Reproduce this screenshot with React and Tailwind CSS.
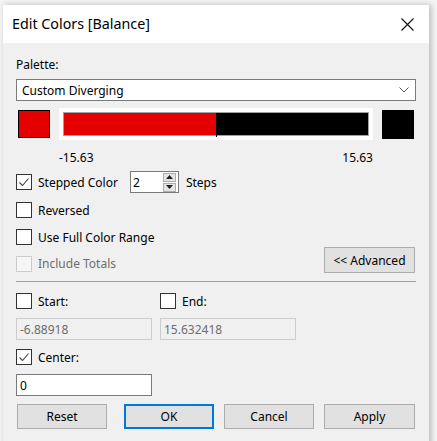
import React from 'react';

const font = { fontFamily: '"Noto Sans", "Segoe UI", Arial, sans-serif' };

const Check = ({ checked, disabled }) => (
  <div
    className={`w-4 h-4 flex items-center justify-center border shrink-0 ${
      disabled ? 'border-[#cccccc] bg-[#f7f7f7]' : 'border-[#333333] bg-white'
    }`}
  >
    {checked && (
      <svg className="w-3 h-3" viewBox="0 0 12 12" fill="none">
        <path d="M1.5 6.5l3 3L10.5 2.5" stroke="#444" strokeWidth="1.1" />
      </svg>
    )}
  </div>
);

const Btn = ({ children, primary, className = '' }) => (
  <button
    className={`h-[25px] bg-[#e1e1e1] text-[12px] text-black flex items-center justify-center pt-px ${
      primary ? 'border-2 border-[#0078d7]' : 'border border-[#adadad]'
    } ${className}`}
  >
    {children}
  </button>
);

export default function App() {
  return (
    <div className="w-[437px] h-[441px] overflow-hidden bg-[#f4f4f4] pl-[3px] pt-[5px]" style={font}>
      <div className="w-[426px] h-[460px] bg-[#f0f0f0] shadow-[2px_0_6px_rgba(0,0,0,0.25)] text-[12px] text-black leading-4">
        {/* Title bar */}
        <div className="h-[38px] bg-white flex items-center justify-between pl-[9px] pr-[15px]">
          <span className="text-[14.3px] text-black">Edit Colors [Balance]</span>
          <svg className="w-[13px] h-[13px]" viewBox="0 0 13 13" fill="none">
            <path d="M0.5 0.5l12 12M12.5 0.5l-12 12" stroke="#111" strokeWidth="1.1" />
          </svg>
        </div>

        {/* Body */}
        <div className="pl-[13px] pr-[13px] pt-[13px] flex flex-col">
          <div className="h-4 pt-px">Palette:</div>

          <div className="mt-[7px] h-[22px] w-[400px] bg-white border border-[#7a7a7a] flex items-center justify-between pl-[5px] pr-[6px]">
            <span className="pt-px">Custom Diverging</span>
            <svg className="w-[10px] h-[6px]" viewBox="0 0 10 6" fill="none">
              <path d="M0.5 0.5l4.5 4.5 4.5-4.5" stroke="#555" strokeWidth="1" />
            </svg>
          </div>

          {/* Colour ramp */}
          <div className="mt-[7px] h-[32px] flex items-center">
            <div className="ml-[2px] w-[32px] h-[28px] bg-[#e50000] border border-black" />
            <div className="ml-[9px] w-[314px] h-[32px] bg-white p-1">
              <div className="relative w-full h-full border border-[#a0a0a0] flex">
                <div className="flex-1 bg-[#e50000]" />
                <div className="flex-1 bg-black" />
                <div className="absolute left-1/2 top-0 -bottom-[2px] w-px bg-black" />
              </div>
            </div>
            <div className="ml-[9px] w-[32px] h-[29px] bg-black" />
          </div>

          <div className="mt-[10px] h-4 ml-[43px] w-[314px] flex justify-between">
            <span>-15.63</span>
            <span>15.63</span>
          </div>

          {/* Stepped colour */}
          <div className="mt-[5px] h-[22px] flex items-center">
            <Check checked />
            <span className="ml-[6px] pt-px">Stepped Color</span>
            <div className="ml-[12px] w-[49px] h-[22px] bg-white border border-[#7a7a7a] flex items-center justify-between pl-[2px] pr-[2px]">
              <span className="pt-px">2</span>
              <div className="flex flex-col gap-px">
                <div className="w-[13px] h-[9px] bg-[#e5e5e5] border border-[#adadad] flex items-center justify-center">
                  <svg className="w-[7px] h-[4px]" viewBox="0 0 7 4">
                    <path d="M3.5 0L7 4H0z" fill="#222" />
                  </svg>
                </div>
                <div className="w-[13px] h-[9px] bg-[#e5e5e5] border border-[#adadad] flex items-center justify-center">
                  <svg className="w-[7px] h-[4px]" viewBox="0 0 7 4">
                    <path d="M0 0h7L3.5 4z" fill="#222" />
                  </svg>
                </div>
              </div>
            </div>
            <span className="ml-[7px] pt-px">Steps</span>
          </div>

          <div className="mt-[9px] h-4 flex items-center">
            <Check />
            <span className="ml-[6px] pt-px">Reversed</span>
          </div>

          <div className="mt-[11px] h-4 flex items-center">
            <Check />
            <span className="ml-[6px] pt-px">Use Full Color Range</span>
          </div>

          <div className="mt-[2px] h-[26px] flex items-end justify-between">
            <div className="flex items-center mb-px">
              <Check disabled />
              <span className="ml-[6px] pt-px text-[#6d6d6d]">Include Totals</span>
            </div>
            <Btn className="w-[91px] h-[26px] mr-[1px]">&lt;&lt; Advanced</Btn>
          </div>

          <div className="mt-[8px] h-px w-[400px] bg-[#a0a0a0]" />

          {/* Start / End */}
          <div className="mt-[11px] h-4 flex items-center">
            <div className="w-[144px] flex items-center">
              <Check />
              <span className="ml-[6px] pt-px">Start:</span>
            </div>
            <Check />
            <span className="ml-[6px] pt-px">End:</span>
          </div>

          <div className="mt-[9px] h-[22px] flex gap-2">
            <div className="w-[136px] h-[22px] bg-[#f0f0f0] border border-[#cccccc] flex items-center pl-[3px] pt-px text-[#6d6d6d]">
              -6.88918
            </div>
            <div className="w-[136px] h-[22px] bg-[#f0f0f0] border border-[#cccccc] flex items-center pl-[3px] pt-px text-[#6d6d6d]">
              15.632418
            </div>
          </div>

          <div className="mt-[9px] h-4 flex items-center">
            <Check checked />
            <span className="ml-[6px] pt-px">Center:</span>
          </div>

          <div className="mt-[9px] w-[136px] h-[22px] bg-white border border-[#7a7a7a] flex items-center pl-[3px] pt-px">
            0
          </div>

          {/* Buttons */}
          <div className="mt-[8px] flex">
            <Btn className="ml-px w-[90px]">Reset</Btn>
            <Btn primary className="ml-[17px] w-[90px]">OK</Btn>
            <Btn className="ml-[10px] w-[90px]">Cancel</Btn>
            <Btn className="ml-[10px] w-[91px]">Apply</Btn>
          </div>
        </div>
      </div>
    </div>
  );
}
